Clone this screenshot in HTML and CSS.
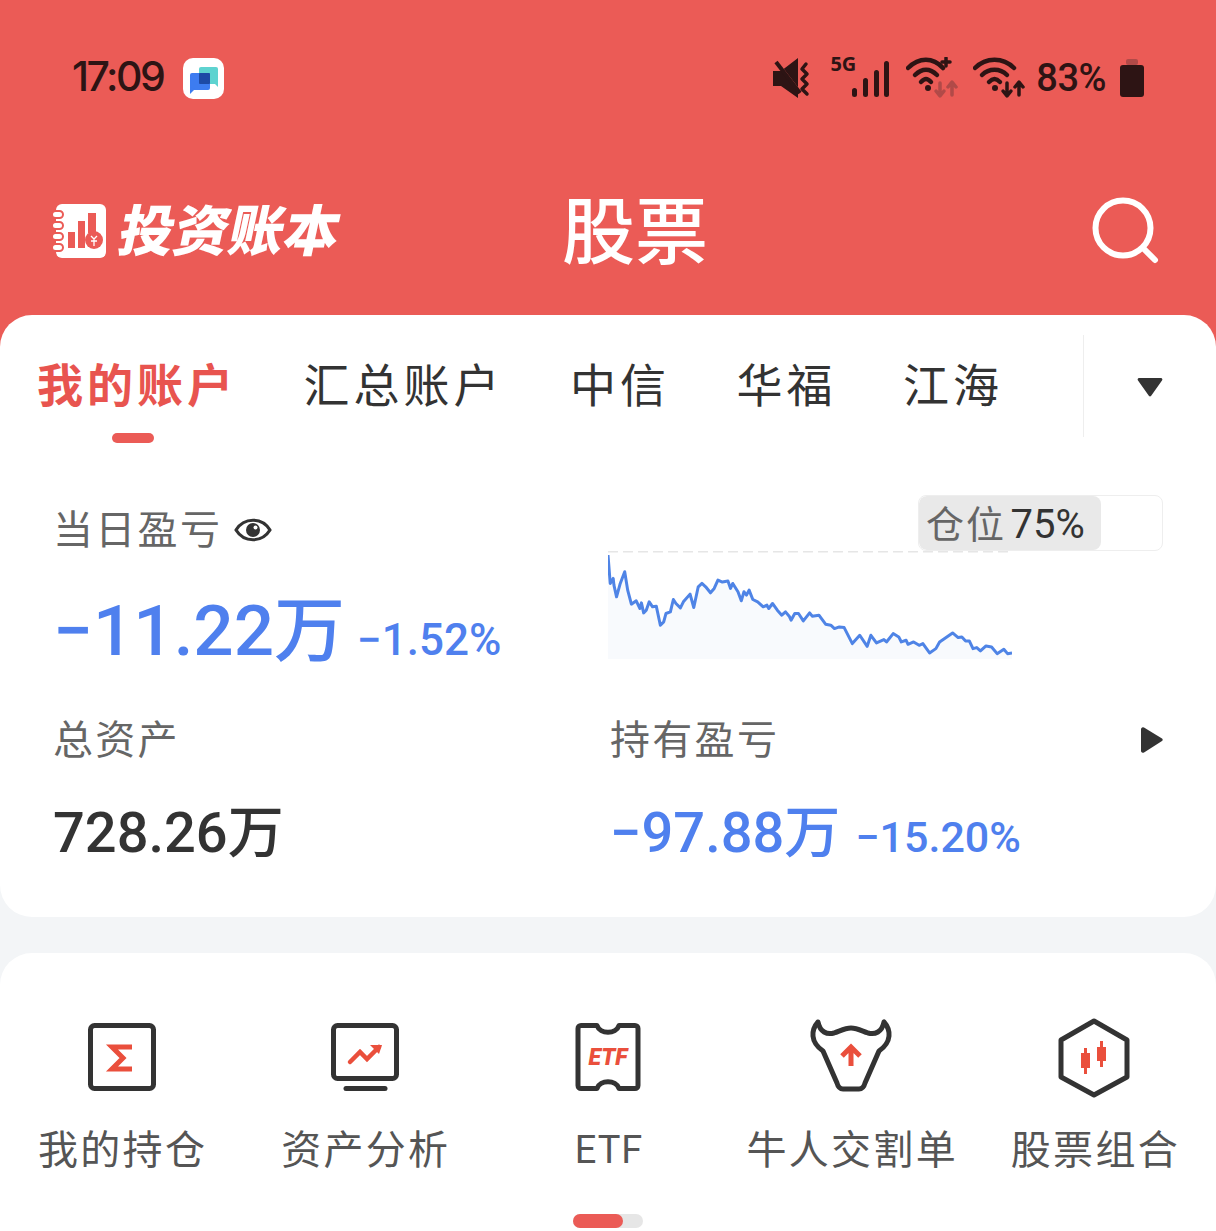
FILE: index.html
```html
<!DOCTYPE html>
<html lang="zh-CN">
<head>
<meta charset="utf-8">
<title>股票</title>
<link rel="stylesheet" href="styles.css">
</head>
<body>
<div class="page">
  <header class="hero">
    <div class="status">
      <div class="status-left">
        <span class="time">17:09</span>
        <span class="app-badge">
          <svg width="41" height="41" viewBox="0 0 41 41"><rect x="16" y="9" width="19" height="17" rx="2" fill="#5ed3d0"/><path d="M31 25l4 4v-6z" fill="#5ed3d0"/><rect x="7" y="15" width="20" height="17" rx="2" fill="#3d7cf0"/><path d="M7 29v7l5-5z" fill="#3d7cf0"/><rect x="16" y="15" width="11" height="11" rx="1" fill="#1d4aa5"/></svg>
        </span>
      </div>
      <div class="status-right">
        <svg class="st-mute" width="40" height="42" viewBox="0 0 40 42"><path d="M0 14h8L25 1v40L8 29H0z" fill="#2d1414"/><path d="M2 3l24 31" stroke="#eb5b56" stroke-width="3"/><path d="M3 5l24 31" stroke="#2d1414" stroke-width="4"/><path d="M33 7l-4 5 5 5-5 5 5 5-5 5 5 5" fill="none" stroke="#2d1414" stroke-width="3.5" stroke-linecap="round" stroke-linejoin="round"/></svg>
        <span class="st-signal">
          <span class="st-5g">5G</span>
          <svg width="38" height="40" viewBox="0 0 38 40"><g fill="#2d1414"><rect x="1" y="30" width="5" height="9" rx="2.5"/><rect x="12" y="20" width="5" height="19" rx="2.5"/><rect x="23" y="12" width="5" height="27" rx="2.5"/><rect x="33" y="3" width="5" height="36" rx="2.5"/></g></svg>
        </span>
        <svg class="st-wifi-a" width="52" height="42" viewBox="0 0 52 42"><g fill="none" stroke="#2d1414" stroke-width="4.5" stroke-linecap="round"><path d="M2 11C13 0 27 0 37 11"/><path d="M9 18c7-7 15-7 22 0"/><path d="M15 25c4-4 6-4 10 0"/><path d="M36 5h8M40 1v8" stroke-width="3.5"/></g><circle cx="22" cy="31" r="3" fill="#2d1414"/><g fill="none" stroke="#b14a48" stroke-width="3.5" stroke-linecap="round" stroke-linejoin="round"><path d="M34 26v12M30 34l4 5 4-5"/><path d="M46 38V26M42 30l4-5 4 5"/></g></svg>
        <svg class="st-wifi-b" width="52" height="42" viewBox="0 0 52 42"><g fill="none" stroke="#2d1414" stroke-width="4.5" stroke-linecap="round"><path d="M2 11C13 0 30 0 41 11"/><path d="M9 18c7-7 18-7 25 0"/><path d="M16 25c4-4 7-4 11 0"/></g><circle cx="22" cy="31" r="3" fill="#2d1414"/><g fill="none" stroke="#2d1414" stroke-width="3.5" stroke-linecap="round" stroke-linejoin="round"><path d="M34 26v12M30 34l4 5 4-5"/><path d="M46 38V26M42 30l4-5 4 5"/></g></svg>
        <span class="battery-text">83%</span>
        <svg class="st-battery" width="24" height="38" viewBox="0 0 24 38"><rect x="6" y="0" width="12" height="6" rx="2" fill="#b14a48"/><rect x="0" y="6" width="24" height="32" rx="3" fill="#2d1414"/></svg>
      </div>
    </div>
    <div class="nav">
      <div class="brand">
        <svg width="54" height="54" viewBox="0 0 54 54"><rect x="4" y="0" width="50" height="54" rx="6" fill="#fff"/><g fill="#fff" stroke="#eb5b56" stroke-width="2"><rect x="0" y="7" width="11" height="7" rx="3.5"/><rect x="0" y="18" width="11" height="7" rx="3.5"/><rect x="0" y="29" width="11" height="7" rx="3.5"/><rect x="0" y="40" width="11" height="7" rx="3.5"/></g><g fill="#eb5b56"><rect x="16" y="28" width="7" height="16"/><rect x="26" y="17" width="7" height="27"/><rect x="36" y="9" width="8" height="20"/><circle cx="42" cy="36" r="9"/></g><path d="M39 32l3 3 3-3M42 35v7M39 37h6" fill="none" stroke="#fff" stroke-width="1.3"/></svg>
        <span class="brand-name">投资账本</span>
      </div>
      <h1 class="title">股票</h1>
      <svg class="search" width="68" height="68" viewBox="0 0 68 68"><circle cx="31" cy="31" r="27.5" fill="none" stroke="#fff" stroke-width="6"/><path d="M51 51l12 12" stroke="#fff" stroke-width="6" stroke-linecap="round"/></svg>
    </div>
  </header>

  <section class="card summary">
    <div class="tabs">
      <div class="tab tab-active">我的账户<i class="tab-mark"></i></div>
      <div class="tab">汇总账户</div>
      <div class="tab">中信</div>
      <div class="tab">华福</div>
      <div class="tab">江海</div>
      <div class="tab-more">
        <svg width="28" height="22" viewBox="0 0 28 22"><path d="M3 2h22a1.500 1.500 0 0 1 1 2.500L15 20a1.500 1.500 0 0 1-2 0L2 4.500A1.500 1.500 0 0 1 3 2z" fill="#333"/></svg>
      </div>
    </div>
    <div class="stats">
      <div class="stat">
        <div class="label">当日盈亏
          <svg class="eye" width="38" height="34" viewBox="0 0 38 34"><path d="M2 17C10 4 28 4 36 17 28 30 10 30 2 17z" fill="none" stroke="#333" stroke-width="3.200" stroke-linejoin="round"/><circle cx="19" cy="17" r="7" fill="#333"/><circle cx="21.500" cy="14.500" r="2" fill="#fff"/></svg>
        </div>
        <div class="value value-lg"><span class="num-lg">−11.22万</span><span class="pct-lg">−1.52%</span></div>
      </div>
      <div class="stat stat-chart">
        <div class="position"><span class="position-fill" style="width:75%"></span><span class="position-text">仓位 <b>75%</b></span></div>
        <svg class="chart" width="404" height="108" viewBox="22 213 1088 323" preserveAspectRatio="none">
          <path d="M22 225L28 310 36 295 38 315 45 350 55 310 67 275 75 330 85 372 98 362 108 385 112 368 118 398 125 390 133 365 142 380 152 378 163 435 172 425 178 400 190 395 198 358 205 370 217 383 225 365 243 342 253 382 265 320 275 310 285 320 298 338 308 325 318 300 330 306 345 303 352 325 358 310 372 335 381 362 388 335 395 345 402 330 412 358 425 365 440 380 450 375 455 385 465 370 478 390 490 405 500 395 510 408 515 420 525 400 535 400 548 422 565 398 572 408 590 405 608 432 622 435 632 445 645 440 658 442 680 490 700 465 720 498 730 465 745 488 765 478 772 485 790 460 805 470 812 485 825 480 830 492 845 485 860 495 870 490 888 518 905 505 915 485 950 458 965 472 975 470 985 482 995 482 1005 505 1015 502 1025 512 1040 497 1055 500 1070 520 1088 507 1098 520 1110 518V536H22Z" fill="#f8fafd"/>
          <path d="M22 215H1110" stroke="#e6e6e6" stroke-width="1.500" stroke-dasharray="10 5" vector-effect="non-scaling-stroke" fill="none"/>
          <path d="M22 225L28 310 36 295 38 315 45 350 55 310 67 275 75 330 85 372 98 362 108 385 112 368 118 398 125 390 133 365 142 380 152 378 163 435 172 425 178 400 190 395 198 358 205 370 217 383 225 365 243 342 253 382 265 320 275 310 285 320 298 338 308 325 318 300 330 306 345 303 352 325 358 310 372 335 381 362 388 335 395 345 402 330 412 358 425 365 440 380 450 375 455 385 465 370 478 390 490 405 500 395 510 408 515 420 525 400 535 400 548 422 565 398 572 408 590 405 608 432 622 435 632 445 645 440 658 442 680 490 700 465 720 498 730 465 745 488 765 478 772 485 790 460 805 470 812 485 825 480 830 492 845 485 860 495 870 490 888 518 905 505 915 485 950 458 965 472 975 470 985 482 995 482 1005 505 1015 502 1025 512 1040 497 1055 500 1070 520 1088 507 1098 520 1110 518" fill="none" stroke="#4f84e6" stroke-width="3" vector-effect="non-scaling-stroke" stroke-linejoin="round"/>
        </svg>
      </div>
      <div class="stat">
        <div class="label">总资产</div>
        <div class="value value-md"><span class="num-md num-dark">728.26万</span></div>
      </div>
      <div class="stat stat-hold">
        <div class="label label-row">持有盈亏
          <svg class="play" width="24" height="28" viewBox="0 0 24 28"><path d="M1 3a2 2 0 0 1 3-1.500l18 11a1.500 1.500 0 0 1 0 2.500L4 26.500A2 2 0 0 1 1 25z" fill="#333"/></svg>
        </div>
        <div class="value value-md"><span class="num-md">−97.88万</span><span class="pct-md">−15.20%</span></div>
      </div>
    </div>
  </section>

  <section class="card shortcuts">
    <div class="shortcut-grid">
      <div class="shortcut">
        <svg width="84" height="80" viewBox="0 0 84 80"><rect x="10.500" y="7.500" width="63" height="63" rx="4" fill="none" stroke="#333" stroke-width="5"/><path d="M52 29H32l11 11-11 11h20" fill="none" stroke="#ea4f3c" stroke-width="5"/></svg>
        <span class="shortcut-label">我的持仓</span>
      </div>
      <div class="shortcut">
        <svg width="84" height="80" viewBox="0 0 84 80"><rect x="10.500" y="7.500" width="63" height="53" rx="4" fill="none" stroke="#333" stroke-width="5"/><path d="M23 70.500H62" stroke="#333" stroke-width="5" stroke-linecap="round"/><path d="M27 44l10-10 7 7 12-12" fill="none" stroke="#ea4f3c" stroke-width="4.500" stroke-linecap="round"/><path d="M47 27h12l-3 9z" fill="#ea4f3c"/></svg>
        <span class="shortcut-label">资产分析</span>
      </div>
      <div class="shortcut">
        <svg width="84" height="80" viewBox="0 0 84 80"><path d="M15 7.500h16c3 9 19 9 22 0h16a3 3 0 0 1 3 3v57a3 3 0 0 1-3 3H53c-3-9-19-9-22 0H15a3 3 0 0 1-3-3v-57a3 3 0 0 1 3-3z" fill="none" stroke="#333" stroke-width="5" stroke-linejoin="round"/><text class="etf-mark" x="42" y="47" text-anchor="middle">ETF</text></svg>
        <span class="shortcut-label shortcut-latin">ETF</span>
      </div>
      <div class="shortcut">
        <svg width="84" height="80" viewBox="0 0 84 80"><path d="M9 4C2 12 1 24 14 33L28 65c1 4 3 6 6 6H50c3 0 5-2 6-6L70 33C83 24 82 12 75 4 73 14 66 17 59 15 53 13 48 10 42 10 36 10 31 13 25 15 18 17 11 14 9 4z" fill="none" stroke="#333" stroke-width="5" stroke-linejoin="round"/><path d="M33 38l9-9 9 9M42 30v18" fill="none" stroke="#ea4f3c" stroke-width="5"/></svg>
        <span class="shortcut-label">牛人交割单</span>
      </div>
      <div class="shortcut">
        <svg width="84" height="80" viewBox="0 0 84 80"><path d="M42 3l33 19v37L42 77 9 59V22z" fill="none" stroke="#333" stroke-width="5" stroke-linejoin="round"/><g fill="#ea4f3c"><rect x="29" y="35" width="9" height="15"/><rect x="32" y="30" width="3" height="26"/><rect x="45" y="29" width="9" height="14"/><rect x="48" y="23" width="3" height="26"/></g></svg>
        <span class="shortcut-label">股票组合</span>
      </div>
    </div>
    <div class="pager"><i class="pager-thumb"></i></div>
  </section>
</div>
</body>
</html>
```

FILE: styles.css
```css
* { box-sizing: border-box; }
html, body { margin: 0; padding: 0; }
body {
  width: 1216px;
  height: 1231px;
  overflow: hidden;
  background: #f3f5f7;
  font-family: "Noto Sans CJK SC", "Noto Sans", sans-serif;
}
.page { display: flex; flex-direction: column; }

.hero { background: #eb5b56; height: 347px; padding-top: 54px; }
.status { display: flex; justify-content: space-between; align-items: center; height: 44px; padding: 0 72px; }
.status-left { display: flex; align-items: center; gap: 20px; }
.time { font: 500 41px/44px Inter, sans-serif; letter-spacing: -2.5px; color: #2d1414; }
.app-badge { display: block; width: 41px; height: 41px; margin-top: 4px; background: #fff; border-radius: 10px; }
.app-badge svg { display: block; }
.status-right { display: flex; align-items: center; position: relative; top: 2px; }
.status-right svg { display: block; flex: none; }
.st-signal { position: relative; display: block; width: 38px; height: 40px; margin-left: 38px; }
.st-5g { position: absolute; right: 33px; top: -4px; font: 700 20px/20px "Noto Sans", sans-serif; color: #2d1414; }
.st-wifi-a { margin-left: 17px; }
.st-wifi-b { margin-left: 15px; }
.battery-text { font: 500 38px/44px Roboto, sans-serif; letter-spacing: -0.5px; color: #2d1414; margin-left: 11px; }
.st-battery { margin-left: 14px; }

.nav { display: grid; grid-template-columns: 510px auto 1fr; align-items: center; height: 100px; margin-top: 83px; padding: 0 56px 0 52px; }
.brand { display: flex; align-items: center; gap: 14px; }
.brand svg { display: block; flex: none; }
.brand-name { font-size: 55px; line-height: 60px; padding-bottom: 8px; font-weight: 900; color: #fff; transform: skewX(-12deg); white-space: nowrap; }
.title { margin: 0; font-size: 73px; line-height: 90px; padding-bottom: 10px; font-weight: 500; color: #fff; }
.search { justify-self: end; display: block; }

.card { background: #fff; border-radius: 32px; }
.summary { margin-top: -32px; height: 602px; }
.tabs { display: flex; align-items: flex-start; gap: 66.5px; padding: 42px 0 0 37px; height: 128px; position: relative; }
.tab { position: relative; font-size: 46px; line-height: 50px; letter-spacing: 4px; color: #333; white-space: nowrap; }
.tab-active { color: #e8544f; font-weight: 700; }
.tab-mark { position: absolute; left: 75px; top: 76px; width: 42px; height: 10px; border-radius: 5px; background: #eb5b56; }
.tab-more { position: absolute; right: 0; top: 20px; width: 133px; height: 102px; border-left: 1px solid #eee; display: flex; align-items: center; justify-content: center; }
.tab-more svg { display: block; margin-top: 2px; }

.stats { display: grid; grid-template-columns: 557px 553px; grid-template-rows: 172px auto; row-gap: 38px; padding: 59px 0 0 53px; }
.stat { position: relative; }
.label { display: flex; align-items: center; font-size: 40px; line-height: 50px; letter-spacing: 2.3px; color: #666; }
.eye { margin-left: 12px; margin-top: 6px; display: block; }
.label-row { justify-content: space-between; }
.play { display: block; margin-right: -1px; margin-top: 6px; }
.value { display: flex; align-items: baseline; font-family: Roboto, "Noto Sans CJK SC", sans-serif; font-weight: 500; color: #4f80ee; white-space: nowrap; }
.value-lg { margin-top: 34px; line-height: 90px; }
.value-md { margin-top: 31px; line-height: 80px; }
.num-lg { font-size: 71px; }
.pct-lg { font-size: 44px; margin-left: 12px; }
.num-md { font-size: 56px; }
.pct-md { font-size: 43px; margin-left: 15px; }
.num-dark { color: #333; }

.stat-chart { height: 172px; }
.chart { position: absolute; left: -2px; top: 49px; display: block; }
.position { position: absolute; right: 0; top: -7px; z-index: 1; width: 245px; height: 56px; border: 1px solid #eee; border-radius: 8px; display: flex; align-items: center; background: #fff; overflow: hidden; }
.position-fill { position: absolute; left: 0; top: 0; bottom: 0; background: #e9e9e9; border-radius: 8px; }
.position-text { position: relative; padding-left: 7px; font-size: 38px; line-height: 50px; color: #666; white-space: nowrap; letter-spacing: 2px; }
.position-text b { font: 400 40px/50px Roboto, sans-serif; letter-spacing: 0; color: #333; margin-left: -6px; }

.shortcuts { margin-top: 36px; height: 320px; padding-top: 65px; }
.shortcut-grid { display: grid; grid-template-columns: repeat(5, 1fr); }
.shortcut { display: flex; flex-direction: column; align-items: center; gap: 24px; }
.shortcut svg { display: block; }
.shortcut-label { padding-left: 2px; font-size: 40px; line-height: 50px; letter-spacing: 2.3px; color: #555; white-space: nowrap; }
.shortcut-latin { font-family: Roboto, sans-serif; font-size: 38px; line-height: 44px; margin-top: 6px; letter-spacing: 1px; }
.etf-mark { font: italic 900 23px Roboto, sans-serif; fill: #ea4f3c; }
.pager { position: relative; width: 70px; height: 14px; margin: 42px auto 0; background: #e6e6e6; border-radius: 7px; }
.pager-thumb { display: block; width: 50px; height: 14px; border-radius: 7px; background: #eb5b56; }
```
